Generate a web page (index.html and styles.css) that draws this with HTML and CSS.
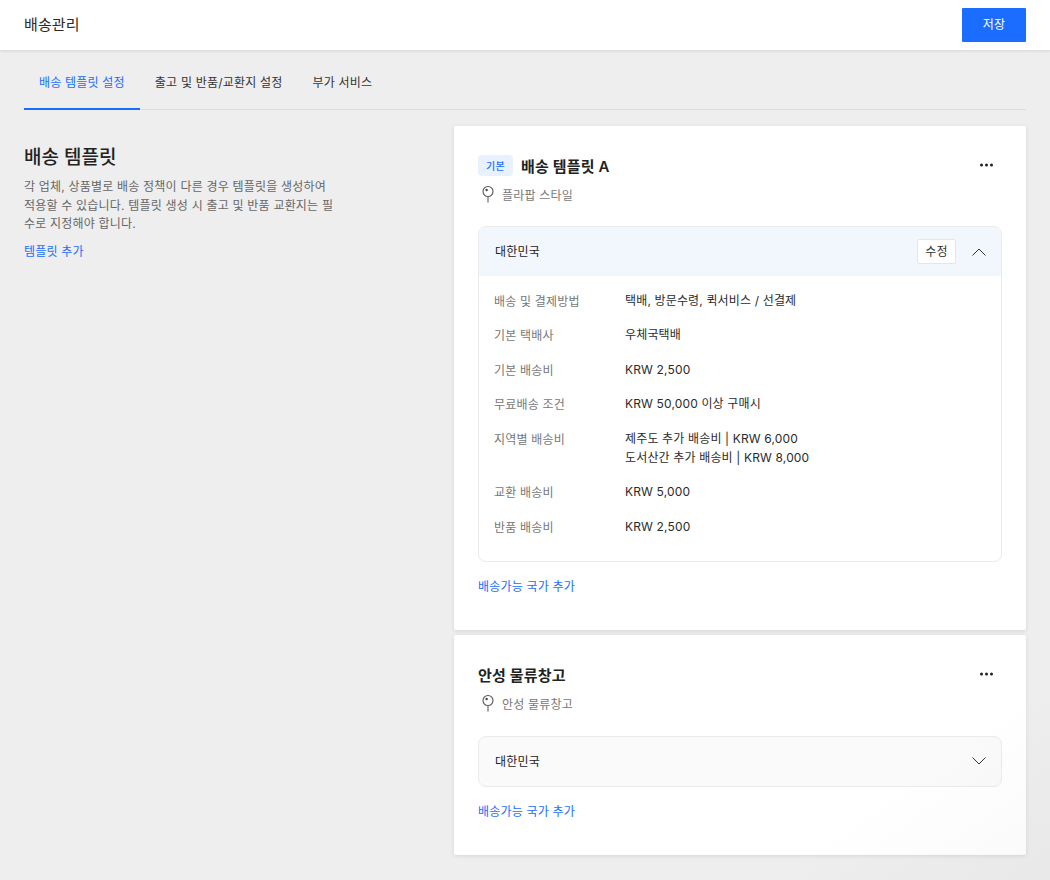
FILE: index.html
```html
<!DOCTYPE html>
<html lang="ko">
<head>
<meta charset="utf-8">
<title>배송관리</title>
<link rel="stylesheet" href="styles.css">
</head>
<body>
<header class="topbar">
  <h1 class="topbar-title">배송관리</h1>
  <button class="save-btn">저장</button>
</header>
<main class="main">
  <nav class="tabs">
    <a class="tab tab-active">배송 템플릿 설정</a>
    <a class="tab">출고 및 반품/교환지 설정</a>
    <a class="tab">부가 서비스</a>
  </nav>
  <div class="columns">
    <section class="intro">
      <h2 class="intro-title">배송 템플릿</h2>
      <p class="intro-text">각 업체, 상품별로 배송 정책이 다른 경우 템플릿을 생성하여 적용할 수 있습니다. 템플릿 생성 시 출고 및 반품 교환지는 필수로 지정해야 합니다.</p>
      <a class="link">템플릿 추가</a>
    </section>
    <div class="cards">
      <article class="card card-first">
        <div class="card-head">
          <div class="card-title-row">
            <span class="badge">기본</span>
            <h3 class="card-title">배송 템플릿 A</h3>
          </div>
          <svg class="more" width="13" height="4" viewBox="0 0 13 4"><circle cx="1.5" cy="2" r="1.5"/><circle cx="6.5" cy="2" r="1.5"/><circle cx="11.5" cy="2" r="1.5"/></svg>
        </div>
        <div class="place">
          <svg class="pin" width="12" height="18" viewBox="0 0 12 18"><circle cx="6" cy="6.5" r="5" fill="none" stroke="#555" stroke-width="1.1"/><circle cx="4.6" cy="5" r="1.2" fill="#444"/><path d="M6 11.5v6" stroke="#888" stroke-width="1.5" fill="none"/></svg>
          <span>플라팝 스타일</span>
        </div>
        <div class="panel">
          <div class="panel-head panel-head-open">
            <span class="panel-name">대한민국</span>
            <button class="edit-btn">수정</button>
            <svg class="chev" width="14" height="8" viewBox="0 0 14 8"><path d="M0.5 7.5 7 1l6.5 6.5" fill="none" stroke="#333" stroke-width="1"/></svg>
          </div>
          <dl class="specs">
            <div class="spec"><dt>배송 및 결제방법</dt><dd>택배, 방문수령, 퀵서비스 / 선결제</dd></div>
            <div class="spec"><dt>기본 택배사</dt><dd>우체국택배</dd></div>
            <div class="spec"><dt>기본 배송비</dt><dd>KRW 2,500</dd></div>
            <div class="spec"><dt>무료배송 조건</dt><dd>KRW 50,000 이상 구매시</dd></div>
            <div class="spec"><dt>지역별 배송비</dt><dd>제주도 추가 배송비 | KRW 6,000<br>도서산간 추가 배송비 | KRW 8,000</dd></div>
            <div class="spec"><dt>교환 배송비</dt><dd>KRW 5,000</dd></div>
            <div class="spec"><dt>반품 배송비</dt><dd>KRW 2,500</dd></div>
          </dl>
        </div>
        <a class="link card-link">배송가능 국가 추가</a>
      </article>
      <article class="card card-second">
        <div class="card-head">
          <div class="card-title-row">
            <h3 class="card-title">안성 물류창고</h3>
          </div>
          <svg class="more" width="13" height="4" viewBox="0 0 13 4"><circle cx="1.5" cy="2" r="1.5"/><circle cx="6.5" cy="2" r="1.5"/><circle cx="11.5" cy="2" r="1.5"/></svg>
        </div>
        <div class="place">
          <svg class="pin" width="12" height="18" viewBox="0 0 12 18"><circle cx="6" cy="6.5" r="5" fill="none" stroke="#555" stroke-width="1.1"/><circle cx="4.6" cy="5" r="1.2" fill="#444"/><path d="M6 11.5v6" stroke="#888" stroke-width="1.5" fill="none"/></svg>
          <span>안성 물류창고</span>
        </div>
        <div class="panel panel-closed">
          <div class="panel-head">
            <span class="panel-name">대한민국</span>
            <svg class="chev" width="14" height="8" viewBox="0 0 14 8"><path d="M0.5 0.5 7 7l6.5-6.5" fill="none" stroke="#333" stroke-width="1"/></svg>
          </div>
        </div>
        <a class="link card-link">배송가능 국가 추가</a>
      </article>
    </div>
  </div>
</main>
<div class="corner-shade"></div>
</body>
</html>
```
FILE: styles.css
```css
* { box-sizing: border-box; }
html, body { margin: 0; padding: 0; }
body {
  height: 880px;
  overflow: hidden;
  background: #eeeeee;
  color: #222;
  font-family: Inter, "Noto Sans CJK KR", sans-serif;
  font-size: 12px;
  letter-spacing: .2px;
  position: relative;
}
.topbar {
  height: 50px;
  background: #fff;
  display: flex;
  align-items: center;
  justify-content: space-between;
  padding: 0 24px;
  box-shadow: 0 1px 3px rgba(0,0,0,.12);
  position: relative;
}
.topbar-title { margin: 0 0 3px; font-size: 15px; font-weight: 400; color: #2a2a2a; letter-spacing: .1px; }
.save-btn {
  width: 64px;
  height: 34px;
  border: 0;
  border-radius: 1px;
  background: #1a6dff;
  color: #fff;
  font: inherit;
  letter-spacing: inherit;
  padding: 0 0 3px;
}
.main { padding: 0 24px; }
.tabs {
  height: 60px;
  display: flex;
  border-bottom: 1px solid #dcdcdc;
}
.tab {
  padding: 0 15px;
  height: 60px;
  line-height: 65px;
  color: #333;
  font-size: 12px;
}
.tab-active { color: #1a6dff; border-bottom: 2px solid #1a6dff; }
.columns { display: flex; justify-content: space-between; padding-top: 16px; }
.intro { width: 314px; padding-top: 19px; }
.intro-title { margin: 0; font-size: 19px; font-weight: 500; line-height: 26px; color: #222; letter-spacing: 0; }
.intro-text { margin: 7px 0 0; font-size: 12px; line-height: 18.6px; color: #666; }
.link { color: #1a6dff; font-size: 12px; display: block; }
.intro .link { margin-top: 9px; line-height: 18px; }
.cards { width: 572px; display: flex; flex-direction: column; gap: 5px; }
.card {
  background: #fff;
  border-radius: 2px;
  padding: 24px;
  box-shadow: 0 1px 4px rgba(0,0,0,.1);
}
.card-first { height: 504px; }
.card-second { height: 220px; }
.card-head { display: flex; justify-content: space-between; align-items: center; height: 30px; padding-right: 9px; }
.card-title-row { display: flex; align-items: center; gap: 8px; }
.badge {
  background: #e8f1ff;
  color: #1a6dff;
  font-size: 10px;
  font-weight: 500;
  border-radius: 4px;
  width: 35px;
  height: 21px;
  display: flex;
  align-items: center;
  justify-content: center;
}
.card-title { margin: 1px 0 0; font-size: 15px; font-weight: 600; color: #222; letter-spacing: .15px; }
.more { fill: #222; display: block; }
.place { display: flex; align-items: center; gap: 8px; margin-top: 4px; height: 20px; padding-left: 4px; color: #777; font-size: 12px; }
.pin { display: block; }
.panel { margin-top: 22px; border: 1px solid #ebebeb; border-radius: 8px; overflow: hidden; background: #fff; }
.panel-head { height: 49px; display: flex; align-items: center; padding: 0 15px 0 16px; }
.panel-head-open { background: #f2f6fd; }
.panel-name { flex: 1; font-size: 12px; color: #222; padding-bottom: 2px; }
.edit-btn { width: 39px; height: 25px; background: #fff; border: 1px solid #e5e5e5; border-radius: 2px; font: inherit; letter-spacing: inherit; color: #333; padding: 0 0 2px; margin-right: 16px; }
.specs { margin: 0; padding: 7px 15px 17.5px; }
.spec { display: flex; padding: 7.75px 0; }
.spec dt { width: 131px; color: #777; font-size: 12px; line-height: 17px; flex: none; padding-top: 2px; }
.spec dd { margin: 0; font-size: 12px; line-height: 19px; color: #2b2b2b; letter-spacing: .15px; }
.card-link { margin-top: 16px; line-height: 18px; }
.panel-closed { background: #fafafa; }
.panel-closed .chev { margin-bottom: 2px; }
.card-second .panel { margin-top: 23px; }
.corner-shade {
  position: absolute;
  right: 0; bottom: 0;
  width: 300px; height: 260px;
  background: linear-gradient(145deg, transparent 55%, rgba(0,0,0,.025) 100%);
  pointer-events: none;
}
```
